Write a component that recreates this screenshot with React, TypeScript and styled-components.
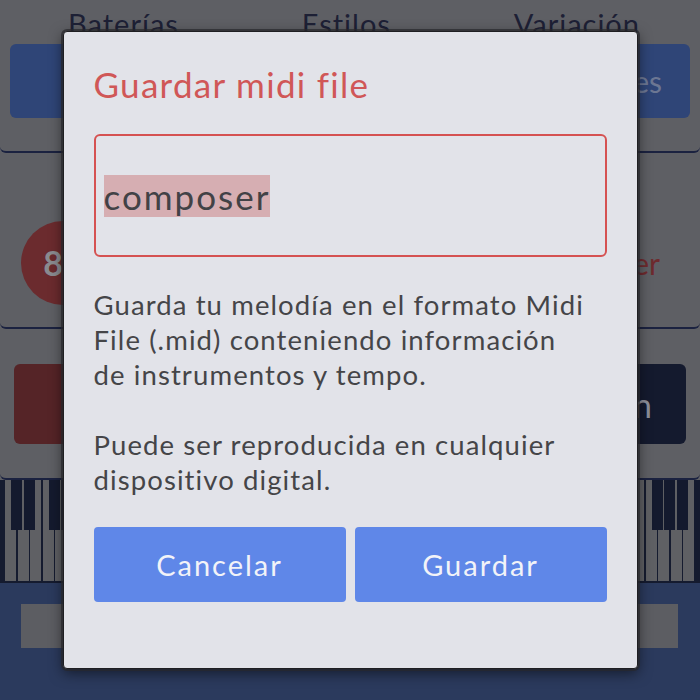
import React from 'react';
import styled, { createGlobalStyle } from 'styled-components';

const GlobalStyle = createGlobalStyle`
  html, body {
    margin: 0;
    padding: 0;
    width: 700px;
    height: 700px;
    overflow: hidden;
    background: #5e5f64;
    font-family: 'Lato', 'Open Sans', sans-serif;
  }
`;

// Background app (dimmed by the modal)
const Screen = styled.div`
  position: relative;
  width: 700px;
  height: 700px;
  display: flex;
  flex-direction: column;
  background: #5e5f64;
  overflow: hidden;
`;

const TopPanel = styled.div`
  height: 153px;
  display: flex;
  flex-direction: column;
  padding: 0 10px;
  box-sizing: border-box;
  border-bottom: 2px solid #1b2240;
  border-radius: 0 0 6px 6px;
`;

const Labels = styled.div`
  display: flex;
  justify-content: space-between;
  padding: 0 50px 0 58px;
  height: 44px;
  align-items: flex-end;
  font-size: 29px;
  letter-spacing: 1px;
  color: #1d2035;
  line-height: 1;
  margin-top: -6px;
`;

const TabRow = styled.div`
  display: flex;
  gap: 10px;
  margin-top: 6px;
`;

const TabButton = styled.div`
  flex: 1;
  height: 74px;
  border-radius: 6px;
  background: #2f4577;
  color: #6c7793;
  font-size: 30px;
  display: flex;
  align-items: center;
  justify-content: flex-end;
  padding-right: 28px;
`;

const Card = styled.div<{ $h: number; $pl: number }>`
  height: ${p => p.$h}px;
  margin-top: 1px;
  border-bottom: 2px solid #1b2240;
  border-radius: 6px;
  display: flex;
  align-items: center;
  justify-content: space-between;
  padding: 0 14px 0 ${p => p.$pl}px;
  box-sizing: border-box;
`;

const Circle = styled.div`
  width: 84px;
  height: 84px;
  border-radius: 50%;
  background: #6b2b2e;
  color: #8a8b90;
  font-size: 34px;
  font-weight: 700;
  display: flex;
  align-items: center;
  justify-content: center;
  margin-top: 44px;
`;

const RedLabel = styled.div`
  font-size: 30px;
  color: #6e2a2e;
  margin: 44px 26px 0 0;
`;

const BigButton = styled.div<{ $bg: string }>`
  width: 250px;
  height: 80px;
  border-radius: 6px;
  background: ${p => p.$bg};
  color: #8c8f9a;
  font-size: 34px;
  display: flex;
  align-items: center;
  justify-content: flex-end;
  padding-right: 34px;
  box-sizing: border-box;
`;

const Piano = styled.div`
  height: 103px;
  background: #151b2f;
  display: flex;
  padding: 0 4px 2px 5px;
  box-sizing: border-box;
`;

const WhiteKey = styled.div`
  flex: 1;
  background: #5f6064;
  margin-right: 1.5px;
  position: relative;
`;

const BlackKey = styled.div`
  position: absolute;
  top: 0;
  right: -6px;
  width: 11px;
  height: 50px;
  background: #141a2e;
  z-index: 1;
`;

const Bottom = styled.div`
  flex: 1;
  background: #2b3a5d;
  padding: 21px 22px 0 21px;
`;

const Slider = styled.div`
  height: 44px;
  background: #5c5d62;
`;

// Modal
const Backdrop = styled.div`
  position: absolute;
  inset: 0;
  z-index: 10;
  display: flex;
  align-items: center;
  justify-content: center;
`;

const Dialog = styled.div`
  width: 575px;
  box-sizing: border-box;
  background: #e2e3e9;
  border: 1px solid #1f1f22;
  border-radius: 4px;
  box-shadow: 0 0 0 2px rgba(40, 40, 44, 0.7), 0 4px 14px rgba(0, 0, 0, 0.55);
  padding: 24px 30px 66px 30px;
  display: flex;
  flex-direction: column;
`;

const Title = styled.h2`
  margin: 0;
  font-weight: 400;
  font-size: 35px;
  letter-spacing: 1.3px;
  line-height: 56px;
  color: #d05757;
`;

const NameField = styled.div`
  margin-top: 22px;
  height: 123px;
  border: 2px solid #d55252;
  border-radius: 6px;
  box-sizing: border-box;
  display: flex;
  align-items: center;
  padding: 0 8px;
  font-size: 35px;
  letter-spacing: 2px;
  color: #424246;
`;

const Selected = styled.span`
  background: #d6aeb2;
  line-height: 42px;
`;

const Text = styled.p`
  margin: 30px 0 0 0;
  max-width: 500px;
  font-size: 27.5px;
  letter-spacing: 1.1px;
  line-height: 35px;
  color: #454548;
  & + & {
    margin-top: 35px;
  }
`;

const Actions = styled.div`
  display: grid;
  grid-template-columns: 1fr 1fr;
  gap: 9px;
  margin-top: 30px;
`;

const ActionButton = styled.button`
  height: 75px;
  border: none;
  border-radius: 4px;
  background: #5f87e8;
  color: #f2f3f8;
  font-family: inherit;
  font-size: 29px;
  letter-spacing: 2px;
  cursor: pointer;
`;

const keyCount = 55;
const hasBlack = (i: number) => {
  if (i >= keyCount - 1) return false;
  const m = i < 28 ? i % 7 : (((i - 51) % 7) + 7) % 7;
  return i < 28 ? m !== 2 && m !== 6 : m !== 3 && m !== 6;
};

export default function App() {
  return (
    <>
      <GlobalStyle />
      <Screen>
        <TopPanel>
          <Labels>
            <span>Baterías</span>
            <span>Estilos</span>
            <span>Variación</span>
          </Labels>
          <TabRow>
            <TabButton />
            <TabButton />
            <TabButton>Patrones</TabButton>
          </TabRow>
        </TopPanel>
        <Card $h={175} $pl={21}>
          <Circle>80</Circle>
          <RedLabel>Timer</RedLabel>
        </Card>
        <Card $h={150} $pl={14}>
          <BigButton $bg="#552427" />
          <BigButton $bg="#141a2e">Fin</BigButton>
        </Card>
        <Piano>
          {Array.from({ length: keyCount }).map((_, i) => (
            <WhiteKey key={i}>{hasBlack(i) && <BlackKey />}</WhiteKey>
          ))}
        </Piano>
        <Bottom>
          <Slider />
        </Bottom>

        <Backdrop>
          <Dialog>
            <Title>Guardar midi file</Title>
            <NameField>
              <Selected>composer</Selected>
            </NameField>
            <Text>
              Guarda tu melodía en el formato Midi File (.mid) conteniendo información de instrumentos y tempo.
            </Text>
            <Text>Puede ser reproducida en cualquier dispositivo digital.</Text>
            <Actions>
              <ActionButton>Cancelar</ActionButton>
              <ActionButton>Guardar</ActionButton>
            </Actions>
          </Dialog>
        </Backdrop>
      </Screen>
    </>
  );
}
